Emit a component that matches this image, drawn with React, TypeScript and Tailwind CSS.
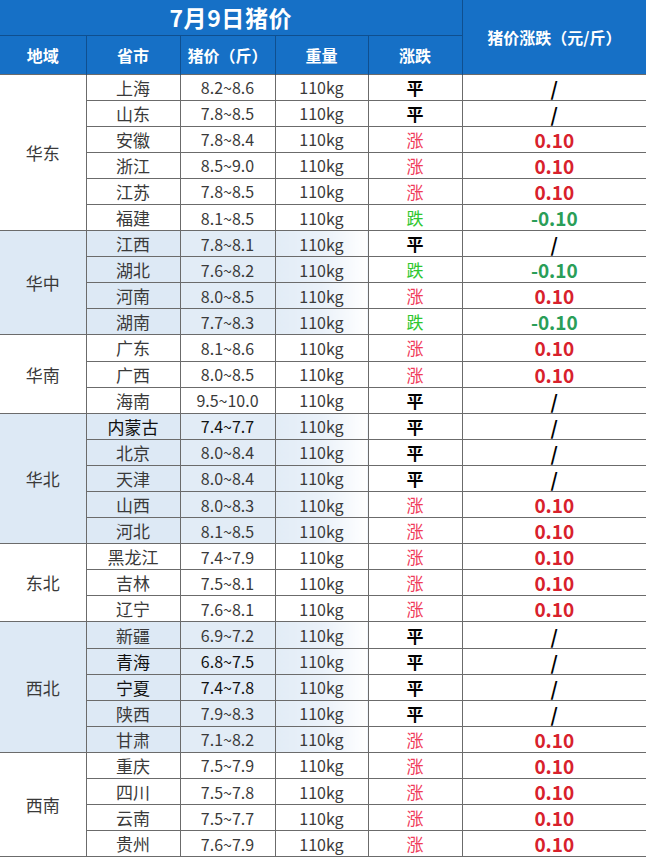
type Row = { city: string; price: string; trend: "平" | "涨" | "跌"; bold?: boolean };
type Group = { region: string; shaded: boolean; rows: Row[] };

const groups: Group[] = [
  {
    region: "华东",
    shaded: false,
    rows: [
      { city: "上海", price: "8.2~8.6", trend: "平" },
      { city: "山东", price: "7.8~8.5", trend: "平" },
      { city: "安徽", price: "7.8~8.4", trend: "涨" },
      { city: "浙江", price: "8.5~9.0", trend: "涨" },
      { city: "江苏", price: "7.8~8.5", trend: "涨" },
      { city: "福建", price: "8.1~8.5", trend: "跌" },
    ],
  },
  {
    region: "华中",
    shaded: true,
    rows: [
      { city: "江西", price: "7.8~8.1", trend: "平" },
      { city: "湖北", price: "7.6~8.2", trend: "跌" },
      { city: "河南", price: "8.0~8.5", trend: "涨" },
      { city: "湖南", price: "7.7~8.3", trend: "跌" },
    ],
  },
  {
    region: "华南",
    shaded: false,
    rows: [
      { city: "广东", price: "8.1~8.6", trend: "涨" },
      { city: "广西", price: "8.0~8.5", trend: "涨" },
      { city: "海南", price: "9.5~10.0", trend: "平" },
    ],
  },
  {
    region: "华北",
    shaded: true,
    rows: [
      { city: "内蒙古", price: "7.4~7.7", trend: "平", bold: true },
      { city: "北京", price: "8.0~8.4", trend: "平" },
      { city: "天津", price: "8.0~8.4", trend: "平" },
      { city: "山西", price: "8.0~8.3", trend: "涨" },
      { city: "河北", price: "8.1~8.5", trend: "涨" },
    ],
  },
  {
    region: "东北",
    shaded: false,
    rows: [
      { city: "黑龙江", price: "7.4~7.9", trend: "涨" },
      { city: "吉林", price: "7.5~8.1", trend: "涨" },
      { city: "辽宁", price: "7.6~8.1", trend: "涨" },
    ],
  },
  {
    region: "西北",
    shaded: true,
    rows: [
      { city: "新疆", price: "6.9~7.2", trend: "平" },
      { city: "青海", price: "6.8~7.5", trend: "平", bold: true },
      { city: "宁夏", price: "7.4~7.8", trend: "平", bold: true },
      { city: "陕西", price: "7.9~8.3", trend: "平" },
      { city: "甘肃", price: "7.1~8.2", trend: "涨" },
    ],
  },
  {
    region: "西南",
    shaded: false,
    rows: [
      { city: "重庆", price: "7.5~7.9", trend: "涨" },
      { city: "四川", price: "7.5~7.8", trend: "涨" },
      { city: "云南", price: "7.5~7.7", trend: "涨" },
      { city: "贵州", price: "7.6~7.9", trend: "涨" },
    ],
  },
];

const font = { fontFamily: '"Noto Sans CJK SC", "Noto Sans", sans-serif' };

function TrendCell({ trend }: { trend: Row["trend"] }) {
  if (trend === "平") return <span className="font-bold text-black">平</span>;
  if (trend === "涨") return <span className="text-[#f03c5a]">涨</span>;
  return <span className="text-[#2fc72f]">跌</span>;
}

function ChangeCell({ trend }: { trend: Row["trend"] }) {
  if (trend === "平") return <span className="font-bold text-[19px] text-black">/</span>;
  if (trend === "涨") return <span className="font-bold text-[19px] text-[#d8212c]">0.10</span>;
  return <span className="font-bold text-[19px] text-[#2a9e58]">-0.10</span>;
}

export default function App() {
  const cell = "border border-[#6b6b6b] text-center p-0";
  return (
    <div className="w-[646px] h-[862px] overflow-hidden bg-white" style={font}>
      <table className="table-fixed border-collapse w-[646px]">
        <colgroup>
          <col className="w-[86px]" />
          <col className="w-[94px]" />
          <col className="w-[95px]" />
          <col className="w-[93px]" />
          <col className="w-[94px]" />
          <col className="w-[184px]" />
        </colgroup>
        <thead className="bg-[#1670c6] text-white">
          <tr className="h-[35px]">
            <th colSpan={5} className="border-b border-r border-[#0f4f8f] text-[23px] font-bold tracking-wide p-0">
              7月9日猪价
            </th>
            <th rowSpan={2} className="border-l border-[#0f4f8f] text-[16px] font-bold p-0">
              猪价涨跌（元/斤）
            </th>
          </tr>
          <tr className="h-[39px] text-[16px] font-bold">
            <th className="border-r border-[#0f4f8f] p-0">地域</th>
            <th className="border-r border-[#0f4f8f] p-0">省市</th>
            <th className="border-r border-[#0f4f8f] p-0">猪价（斤）</th>
            <th className="border-r border-[#0f4f8f] p-0">重量</th>
            <th className="border-r border-[#0f4f8f] p-0">涨跌</th>
          </tr>
        </thead>
        <tbody className="text-[16px] text-[#3a3a3a]">
          {groups.map((g) =>
            g.rows.map((r, i) => (
              <tr key={g.region + r.city} className="h-[26.1px] leading-none">
                {i === 0 && (
                  <td
                    rowSpan={g.rows.length}
                    className={`border-y border-r border-[#6b6b6b] text-center text-[17px] p-0 ${g.shaded ? "bg-[#dde9f5]" : ""}`}
                  >
                    {g.region}
                  </td>
                )}
                <td className={`${cell} text-[17px] ${g.shaded ? "bg-[#dde9f5]" : ""} ${r.bold ? "text-[#111]" : ""}`}>
                  {r.city}
                </td>
                <td className={`${cell} ${g.shaded ? "bg-[#e2ecf6]" : ""} ${r.bold ? "text-[#111]" : ""}`}>
                  {r.price}
                </td>
                <td className={`${cell} ${g.shaded ? "bg-gradient-to-r from-[#e2ecf6] via-[#eaf1f9] to-white" : ""}`}>110kg</td>
                <td className={`${cell} text-[17px]`}>
                  <TrendCell trend={r.trend} />
                </td>
                <td className="border-y border-l border-[#6b6b6b] text-center p-0">
                  <ChangeCell trend={r.trend} />
                </td>
              </tr>
            ))
          )}
        </tbody>
      </table>
    </div>
  );
}
